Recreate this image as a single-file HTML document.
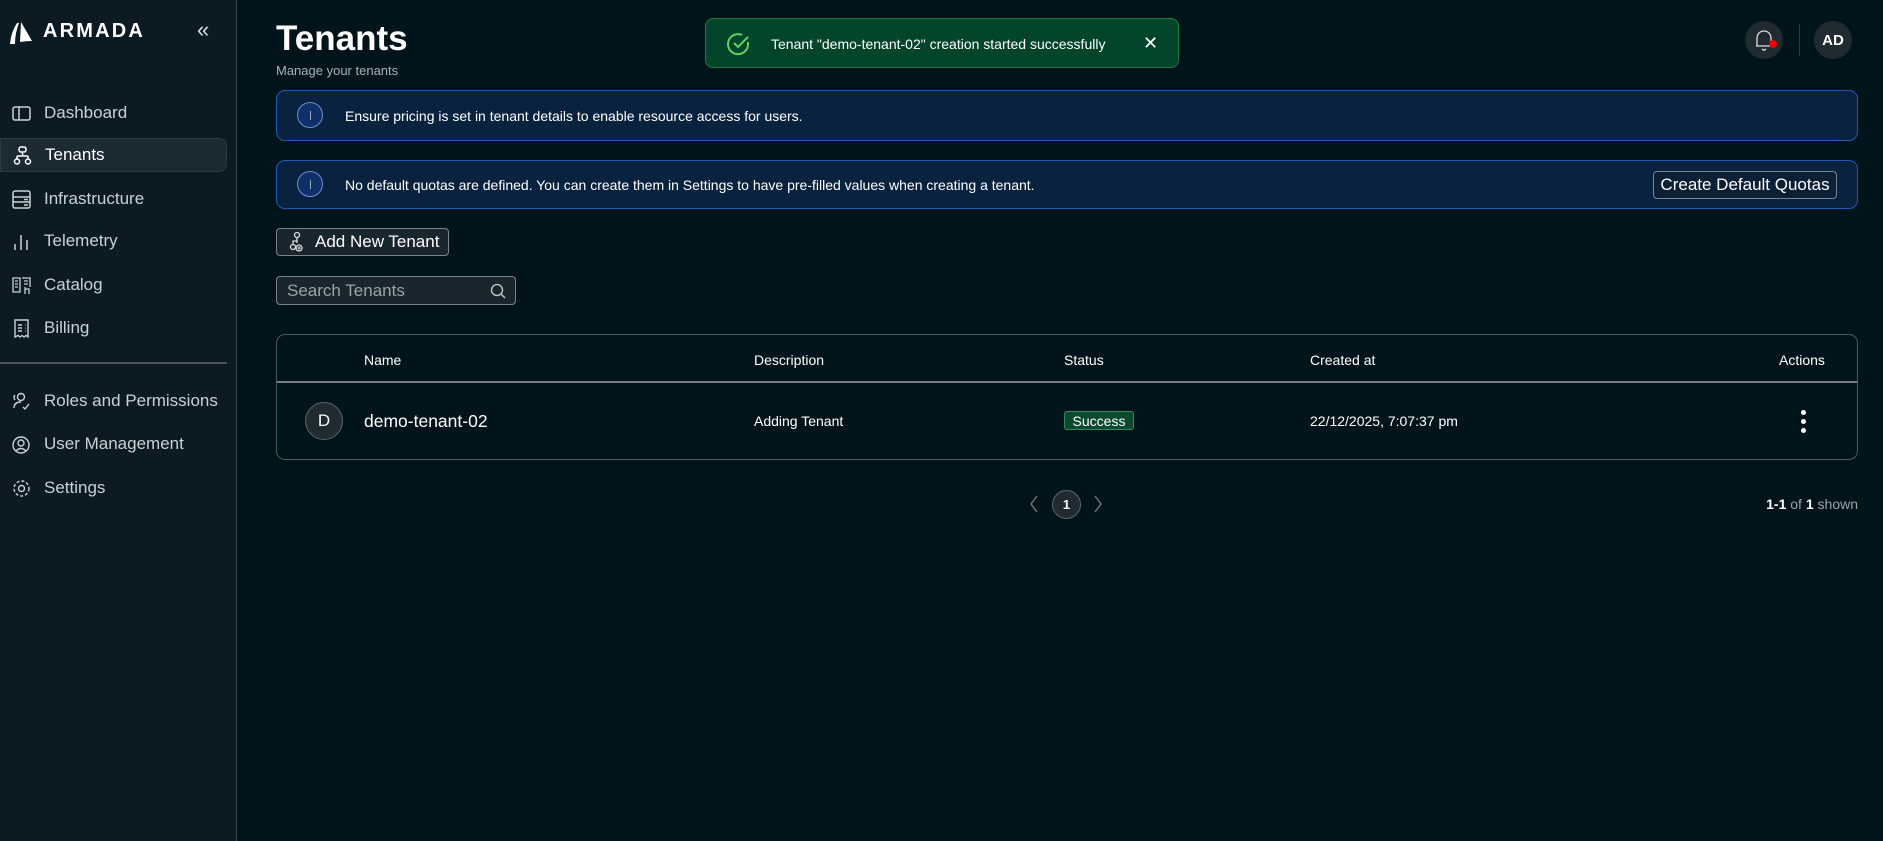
<!DOCTYPE html>
<html><head><meta charset="utf-8"><style>
*{box-sizing:border-box;margin:0;padding:0}
body{width:1883px;height:841px;background:#02141b;font-family:"Liberation Sans",sans-serif;color:#fff;position:relative;overflow:hidden}
.side{position:absolute;left:0;top:0;width:237px;height:841px;background:#0c1b23;border-right:1px solid #3a464d}
.nav{position:absolute;left:0;width:227px;height:34px;display:flex;align-items:center;font-size:17px;color:#c9d1d6}
.nav svg{position:absolute;left:11px;width:21px;height:21px}
.nav span{position:absolute;left:44px}
.nav.act{background:#1c2a33;border:1px solid #2b3a43;border-radius:0 8px 8px 0;color:#fff}
.abs{position:absolute}
.banner{position:absolute;left:276px;width:1582px;background:#082240;border:1.5px solid #2159b8;border-radius:9px;font-size:14px;display:flex;align-items:center}
.ic{position:absolute;left:297px;width:26px;height:26px;border:1.5px solid #6f8fd0;border-radius:50%;background:#10306a}
.btn{position:absolute;border:1px solid #7a848a;border-radius:4px;background:#1a262d;font-size:17px;display:flex;align-items:center}
.th{position:absolute;top:352px;font-size:14px}
</style></head><body>
<div class="side">
 <svg class="abs" style="left:8px;top:20px" width="30" height="26" viewBox="0 0 30 26"><path d="M2 24 Q3 12 9 3 L11 3 Q7 13 7 24Z M12 22 L13 2 L24 21 Q18 21 12 22Z" fill="#fff"/></svg>
 <div class="abs" style="left:43px;top:20px;font-size:20px;font-weight:bold;letter-spacing:2.2px">ARMADA</div>
 <div class="abs" style="left:197px;top:17px;font-size:22px;color:#ddd">«</div>
 <div class="nav" style="top:96px"><svg viewBox="0 0 21 21" fill="none" stroke="#c9d1d6" stroke-width="1.5"><rect x="2" y="4" width="17" height="13" rx="2"/><path d="M8 4v13"/></svg><span>Dashboard</span></div>
 <div class="nav act" style="top:138px"><svg viewBox="0 0 21 21" fill="none" stroke="#fff" stroke-width="1.5"><rect x="7" y="2" width="7" height="5" rx="2"/><path d="M10.5 7v4M5 11h11M5 11v3M16 11v3"/><circle cx="5" cy="16.5" r="2.5"/><circle cx="16" cy="16.5" r="2.5"/></svg><span>Tenants</span></div>
 <div class="nav" style="top:182px"><svg viewBox="0 0 21 21" fill="none" stroke="#c9d1d6" stroke-width="1.5"><rect x="2" y="2" width="17" height="17" rx="2"/><path d="M2 8h17M2 13h17M13 10.5h4M13 16h4"/></svg><span>Infrastructure</span></div>
 <div class="nav" style="top:224px"><svg viewBox="0 0 21 21" fill="none" stroke="#c9d1d6" stroke-width="1.5"><path d="M4 13v6M10 4v15M16 9v10"/></svg><span>Telemetry</span></div>
 <div class="nav" style="top:268px"><svg viewBox="0 0 21 21" fill="none" stroke="#c9d1d6" stroke-width="1.3"><path d="M2 3h7v14H2zM11 3h8v9M4 6h3M4 9h3M4 12h3M13 6h4M13 9h4M14 12v7M14 14h4v5"/></svg><span>Catalog</span></div>
 <div class="nav" style="top:311px"><svg viewBox="0 0 21 21" fill="none" stroke="#c9d1d6" stroke-width="1.4"><path d="M4 2h13v17l-2-1.5-2 1.5-2-1.5-2 1.5-2-1.5-3 1.5z"/><path d="M7 7h4M7 10h4M7 13h4M14 7h.5M14 10h.5M14 13h.5"/></svg><span>Billing</span></div>
 <div class="abs" style="left:0;top:362px;width:227px;height:2px;background:#4a555b"></div>
 <div class="nav" style="top:384px"><svg viewBox="0 0 21 21" fill="none" stroke="#c9d1d6" stroke-width="1.4"><circle cx="10" cy="6" r="3.5"/><path d="M3 17q0-6 7-6M12 16l2 2 4-5M4 4q-2 2 0 5"/></svg><span>Roles and Permissions</span></div>
 <div class="nav" style="top:427px"><svg viewBox="0 0 21 21" fill="none" stroke="#c9d1d6" stroke-width="1.4"><circle cx="10" cy="11" r="8"/><circle cx="10" cy="9" r="3"/><path d="M5 17q5-5 10 0"/></svg><span>User Management</span></div>
 <div class="nav" style="top:471px"><svg viewBox="0 0 21 21" fill="none" stroke="#c9d1d6" stroke-width="1.4"><circle cx="10.5" cy="10.5" r="3"/><circle cx="10.5" cy="10.5" r="7.5" stroke-dasharray="3 2"/></svg><span>Settings</span></div>
</div>

<div class="abs" style="left:276px;top:19px;font-size:35px;font-weight:bold">Tenants</div>
<div class="abs" style="left:276px;top:63px;font-size:13px;color:#a8b1b6">Manage your tenants</div>

<div class="abs" style="left:705px;top:18px;width:474px;height:50px;background:#03452a;border:1px solid #1e7a3e;border-radius:8px;font-size:14px">
 <svg class="abs" style="left:20px;top:12px" width="26" height="26" viewBox="0 0 26 26" fill="none" stroke="#5fd35f" stroke-width="2"><path d="M22 11v2a10 10 0 1 1-6-9"/><path d="M8 12l4 4 10-10"/></svg>
 <div class="abs" style="left:65px;top:17px">Tenant "demo-tenant-02" creation started successfully</div>
 <div class="abs" style="left:437px;top:14px;font-size:18px">✕</div>
</div>

<div class="abs" style="left:1745px;top:21px;width:38px;height:38px;border-radius:50%;background:#1f2b31"></div>
<svg class="abs" style="left:1752px;top:27px" width="24" height="26" viewBox="0 0 24 26" fill="none" stroke="#ddd" stroke-width="1.3"><path d="M5 19V11a7 7 0 0 1 14 0v8H4h16M10 22q2 2 4 0"/></svg>
<div class="abs" style="left:1769px;top:40px;width:8px;height:8px;border-radius:50%;background:#e00"></div>
<div class="abs" style="left:1799px;top:24px;width:1px;height:32px;background:#2e3a40"></div>
<div class="abs" style="left:1814px;top:21px;width:38px;height:38px;border-radius:50%;background:#1f2b31;font-size:15px;font-weight:bold;display:flex;align-items:center;justify-content:center">AD</div>

<div class="banner" style="top:90px;height:51px"><span style="position:absolute;left:68px">Ensure pricing is set in tenant details to enable resource access for users.</span></div>
<div class="ic" style="top:102px"></div><div class="abs" style="left:309.5px;top:111px;width:1.5px;height:9px;background:#9ab"></div>
<div class="banner" style="top:160px;height:49px"><span style="position:absolute;left:68px">No default quotas are defined. You can create them in Settings to have pre-filled values when creating a tenant.</span></div>
<div class="ic" style="top:171px"></div><div class="abs" style="left:309.5px;top:180px;width:1.5px;height:9px;background:#9ab"></div>
<div class="btn" style="left:1653px;top:171px;width:184px;height:28px;background:#0b1f35;justify-content:center">Create Default Quotas</div>

<div class="btn" style="left:276px;top:228px;width:173px;height:28px"><svg style="margin:0 6px 0 12px" width="20" height="22" viewBox="0 0 20 22" fill="none" stroke="#ddd" stroke-width="1.3"><circle cx="8" cy="4" r="2.5"/><path d="M8 7v5M8 10H4v3"/><circle cx="4" cy="16" r="2.5"/><circle cx="10" cy="17" r="3"/><path d="M10 15.5v3M8.5 17h3"/></svg>Add New Tenant</div>
<div class="btn" style="left:276px;top:276px;width:240px;height:29px;padding-left:10px;color:#9aa3a8">Search Tenants
 <svg class="abs" style="left:213px;top:6px" width="16" height="16" viewBox="0 0 16 16" fill="none" stroke="#ccc" stroke-width="1.3"><circle cx="7" cy="7" r="5.5"/><path d="M11 11l4 4"/></svg></div>

<div class="abs" style="left:276px;top:334px;width:1582px;height:126px;border:1px solid #4e585e;border-radius:9px"></div>
<div class="abs" style="left:277px;top:381px;width:1580px;height:1.5px;background:#767e83"></div>
<div class="th" style="left:364px">Name</div>
<div class="th" style="left:754px">Description</div>
<div class="th" style="left:1064px">Status</div>
<div class="th" style="left:1310px">Created at</div>
<div class="th" style="left:1779px">Actions</div>
<div class="abs" style="left:305px;top:402px;width:38px;height:38px;border-radius:50%;background:#1f2b31;border:1px solid #5a656b;font-size:17px;display:flex;align-items:center;justify-content:center">D</div>
<div class="abs" style="left:364px;top:411px;font-size:17.5px">demo-tenant-02</div>
<div class="abs" style="left:754px;top:413px;font-size:14px">Adding Tenant</div>
<div class="abs" style="left:1064px;top:411px;width:70px;height:19px;background:#0c4a30;border:1px solid #2f8a5a;border-radius:3px;font-size:14px;display:flex;align-items:center;justify-content:center">Success</div>
<div class="abs" style="left:1310px;top:413px;font-size:14px">22/12/2025, 7:07:37 pm</div>
<div class="abs" style="left:1801px;top:410px;width:5px;height:5px;border-radius:50%;background:#fff;box-shadow:0 9px 0 #fff,0 18px 0 #fff"></div>

<svg class="abs" style="left:1028px;top:494px" width="12" height="20" viewBox="0 0 12 20" fill="none" stroke="#777" stroke-width="1.4"><path d="M9 2L3 10l6 8"/></svg>
<div class="abs" style="left:1052px;top:490px;width:29px;height:29px;border-radius:50%;background:#1f2b31;border:1px solid #5a656b;font-size:13px;font-weight:bold;display:flex;align-items:center;justify-content:center">1</div>
<svg class="abs" style="left:1092px;top:494px" width="12" height="20" viewBox="0 0 12 20" fill="none" stroke="#777" stroke-width="1.4"><path d="M3 2l6 8-6 8"/></svg>
<div class="abs" style="right:25px;top:496px;font-size:14px;color:#9aa3a8"><b style="color:#fff">1-1</b> of <b style="color:#fff">1</b> shown</div>
</body></html>
